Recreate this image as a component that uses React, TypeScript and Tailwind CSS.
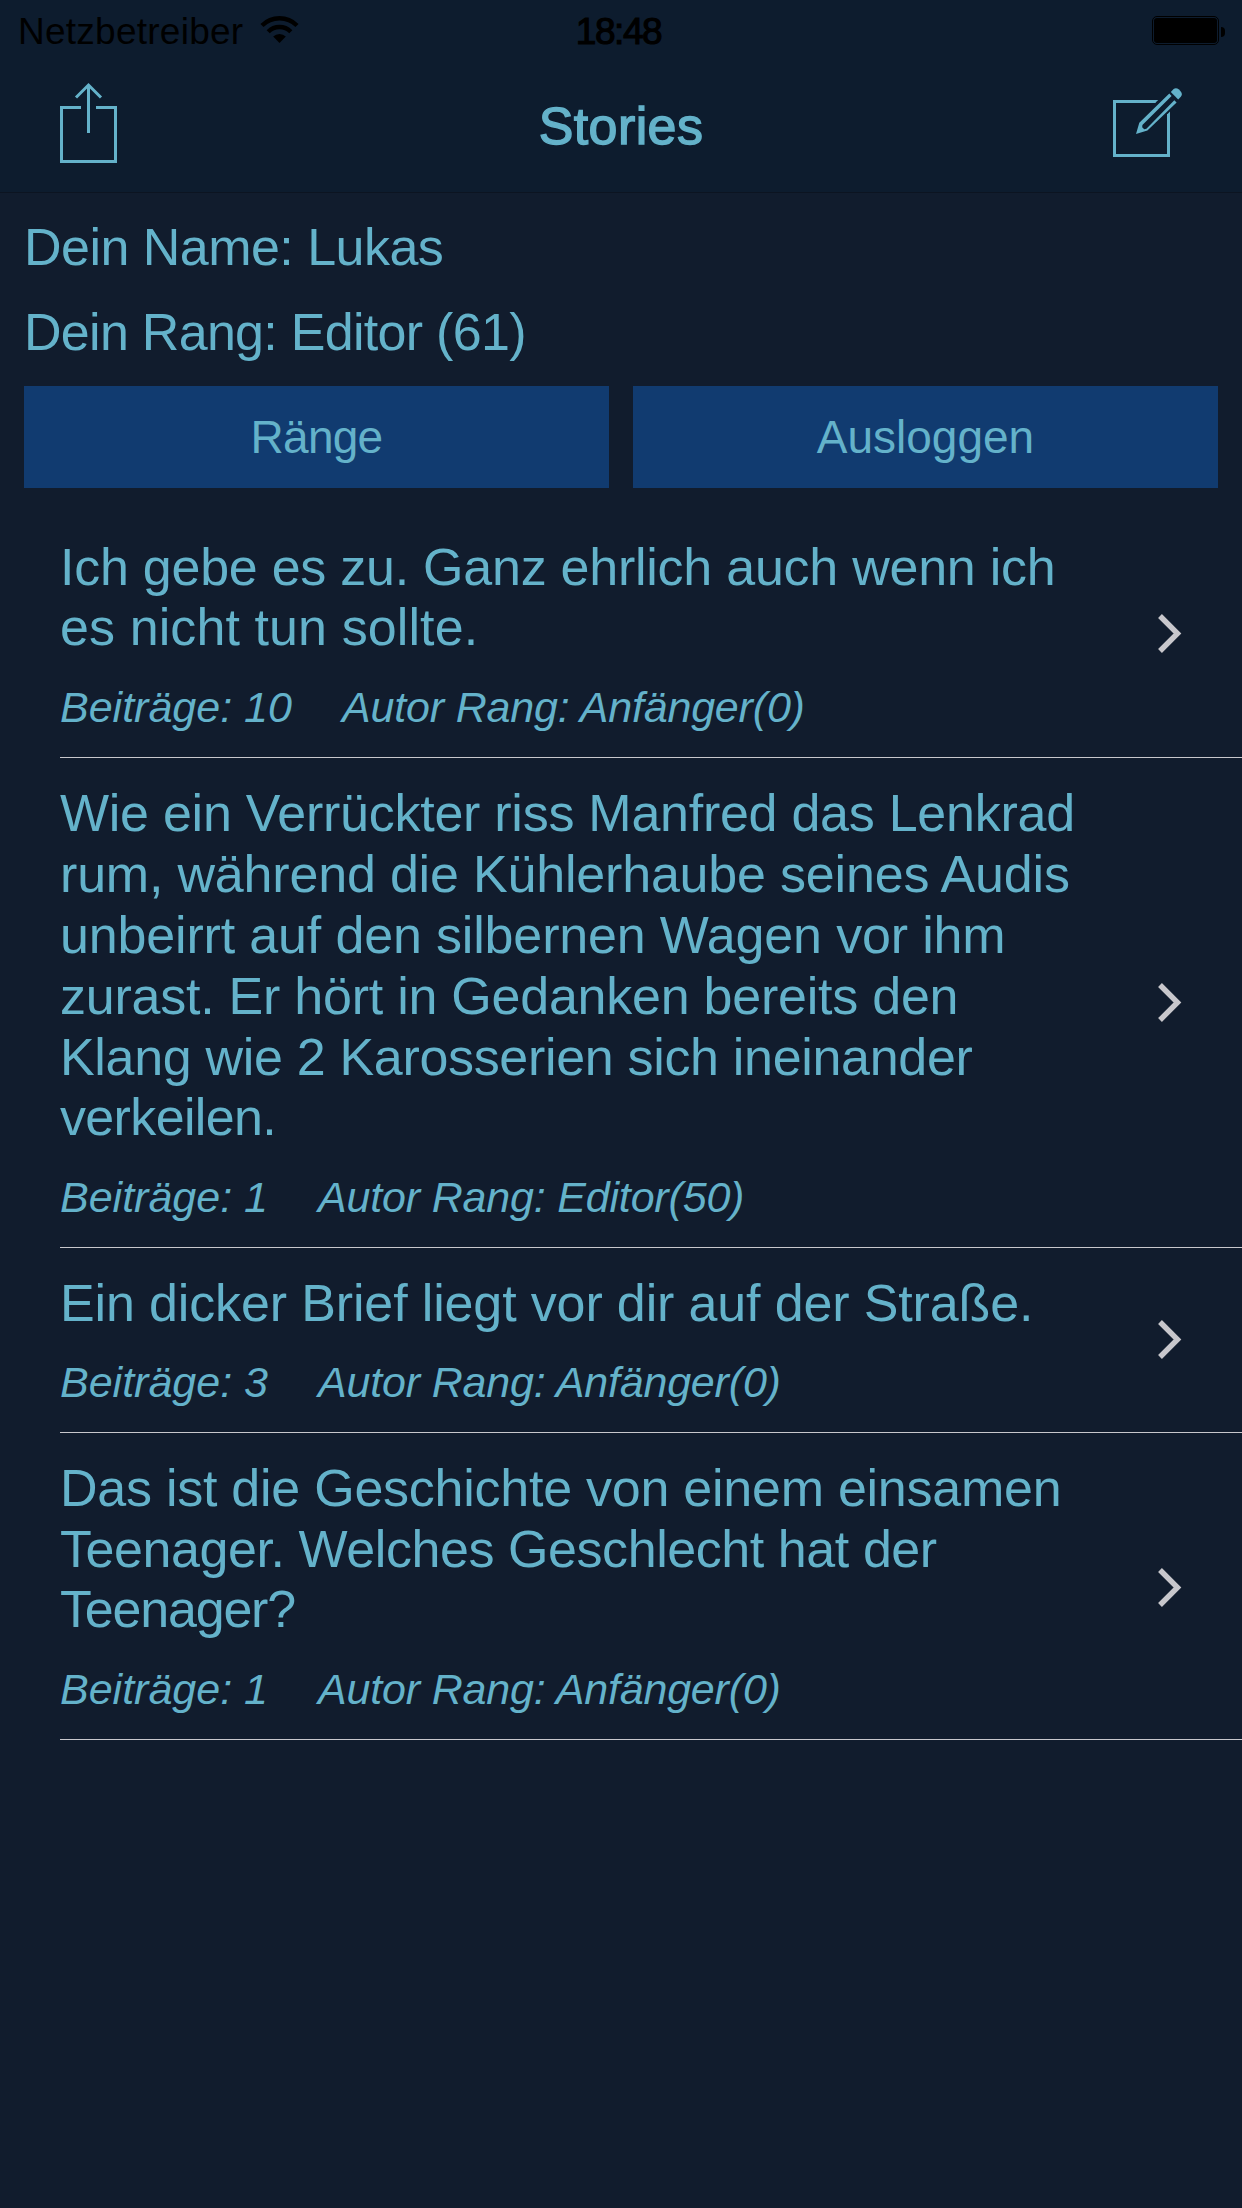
type Line = [text: string, spacing: string];

interface Story {
  lines: Line[];
  posts: string;
  postsWidth: string;
  rank: string;
  chevron: string;
}

const stories: Story[] = [
  {
    lines: [
      ["Ich gebe es zu. Ganz ehrlich auch wenn ich", "tracking-[-0.25px]"],
      ["es nicht tun sollte.", "tracking-[0.1px]"],
    ],
    posts: "Beiträge: 10",
    postsWidth: "w-[282px]",
    rank: "Autor Rang: Anfänger(0)",
    chevron: "mb-[2px]",
  },
  {
    lines: [
      ["Wie ein Verrückter riss Manfred das Lenkrad", "tracking-[-0.26px]"],
      ["rum, während die Kühlerhaube seines Audis", "tracking-[-0.19px]"],
      ["unbeirrt auf den silbernen Wagen vor ihm", "tracking-[-0.16px]"],
      ["zurast. Er hört in Gedanken bereits den", "tracking-[-0.24px]"],
      ["Klang wie 2 Karosserien sich ineinander", "tracking-[-0.32px]"],
      ["verkeilen.", "tracking-[-0.65px]"],
    ],
    posts: "Beiträge: 1",
    postsWidth: "w-[258px]",
    rank: "Autor Rang: Editor(50)",
    chevron: "",
  },
  {
    lines: [["Ein dicker Brief liegt vor dir auf der Straße.", "tracking-[-0.14px]"]],
    posts: "Beiträge: 3",
    postsWidth: "w-[258px]",
    rank: "Autor Rang: Anfänger(0)",
    chevron: "mb-px",
  },
  {
    lines: [
      ["Das ist die Geschichte von einem einsamen", "tracking-[-0.25px]"],
      ["Teenager. Welches Geschlecht hat der", "tracking-[-0.43px]"],
      ["Teenager?", "tracking-[-1.2px]"],
    ],
    posts: "Beiträge: 1",
    postsWidth: "w-[258px]",
    rank: "Autor Rang: Anfänger(0)",
    chevron: "mt-[3px]",
  },
];

function WifiIcon() {
  return (
    <svg className="ml-[17px] mt-[16px] h-[28px] w-[39px]" viewBox="0 0 39 28" fill="none" stroke="#000" strokeWidth="4.4">
      <path d="M2 9.5a24.8 24.8 0 0 1 35 0" />
      <path d="M8.2 15.7a16 16 0 0 1 22.6 0" />
      <path d="M19.5 27l-6.3-6.4a9 9 0 0 1 12.6 0z" fill="#000" stroke="none" />
    </svg>
  );
}

function BatteryIcon() {
  return (
    <div className="mr-[17px] mt-[16px] flex h-[29px] items-center gap-[2px]">
      <div className="h-[29px] w-[67px] rounded-[5px] border border-black p-px">
        <div className="h-full w-full rounded-[3px] bg-black" />
      </div>
      <div className="mt-[2px] h-[10px] w-[4px] rounded-r-full bg-black" />
    </div>
  );
}

function ShareIcon() {
  return (
    <svg className="ml-[60px] mt-[22px] h-[82px] w-[57px]" viewBox="0 0 57 82" fill="none" stroke="currentColor" strokeWidth="3">
      <path d="M21 25.5H1.5V79.5H55.5V25.5H36" />
      <path d="M28.5 51V3" />
      <path d="M16 15.5L28.5 3L41 15.5" />
    </svg>
  );
}

function ComposeIcon() {
  return (
    <svg className="mr-[59px] mt-[27px] h-[71px] w-[70px]" viewBox="0 0 70 71" fill="none" stroke="currentColor" strokeWidth="3">
      <path d="M42.5 14.5H1.5V68.5H55.5V27" />
      <path d="M54 30v-2.5l3-3v5.500zM42 13h3.200l-3.200 3z" fill="currentColor" stroke="none" />
      <path
        d="M23 47L26.3 35.7L56.300 6.600L58.600 8.900L29.400 38L29.200 40.300L31.200 42.200L33.400 41.800L61.300 13.300L63.600 15.600L34.400 43.400Z"
        fill="currentColor"
        stroke="none"
      />
      <path d="M57.8 5L60.6 2Q63 0 66 2.600L67.400 4Q70 7 68 9.600L65.200 12.600Z" fill="currentColor" stroke="none" />
    </svg>
  );
}

function Chevron({ className }: { className: string }) {
  return (
    <svg className={"h-[39px] w-[24px] shrink-0 " + className} viewBox="0 0 24 39" fill="none" stroke="#c8c7cc" strokeWidth="5.4">
      <path d="M2 2L19.5 19.500L2 37" />
    </svg>
  );
}

function StoryRow({ story }: { story: Story }) {
  return (
    <li className="ml-[60px] flex items-center justify-between border-b border-[#c8c7cc] pr-[60px]">
      <div className="pb-[25px] pt-[25px]">
        <p className="text-[52px] leading-[61px]">
          {story.lines.map(([text, spacing], i) => (
            <span
              key={text}
              className={
                "block whitespace-nowrap " +
                spacing +
                (i > 0 && i === story.lines.length - 1 ? " -mt-px pb-px" : "")
              }
            >
              {text}
            </span>
          ))}
        </p>
        <p className="mt-[23px] flex whitespace-nowrap text-[43px] italic leading-[50px]">
          <span className={story.postsWidth}>{story.posts}</span>
          <span className="tracking-[-0.18px]">{story.rank}</span>
        </p>
      </div>
      <Chevron className={story.chevron} />
    </li>
  );
}

export default function App() {
  return (
    <div className="flex h-[2208px] w-[1242px] flex-col overflow-hidden bg-[#111c2d] font-['Liberation_Sans',sans-serif] text-[#64b2ca]">
      <header className="border-b border-[#0c1421] bg-[#0d1c2e]">
        <div className="grid h-[60px] grid-cols-[1fr_auto_1fr] text-[37px] leading-[57px] text-black">
          <div className="flex items-start pl-[18px]">
            <span className="pt-[3px] tracking-[0.25px]">Netzbetreiber</span>
            <WifiIcon />
          </div>
          <span className="pr-[5px] pt-[3px] tracking-[-1.4px] [-webkit-text-stroke:1.1px_currentColor]">18:48</span>
          <div className="flex items-start justify-end">
            <BatteryIcon />
          </div>
        </div>
        <div className="grid h-[132px] grid-cols-[1fr_auto_1fr]">
          <button className="flex items-start" aria-label="Teilen">
            <ShareIcon />
          </button>
          <h1 className="text-[52px] leading-[132px] tracking-[0.4px] [-webkit-text-stroke:1.4px_currentColor]">Stories</h1>
          <button className="flex items-start justify-end" aria-label="Neue Story">
            <ComposeIcon />
          </button>
        </div>
      </header>

      <section className="px-[24px] pt-[12px] text-[52px] leading-[85px]">
        <p className="tracking-[-0.53px]">Dein Name: Lukas</p>
        <p className="tracking-[-0.71px]">Dein Rang: Editor (61)</p>
        <div className="mt-[11px] grid grid-cols-2 gap-[24px] text-[46px] leading-[102px]">
          <button className="h-[102px] bg-[#113b70] tracking-[-0.75px]">Ränge</button>
          <button className="h-[102px] bg-[#113b70]">Ausloggen</button>
        </div>
      </section>

      <ul className="mt-[24px]">
        {stories.map((story) => (
          <StoryRow key={story.lines[0][0]} story={story} />
        ))}
      </ul>
    </div>
  );
}
